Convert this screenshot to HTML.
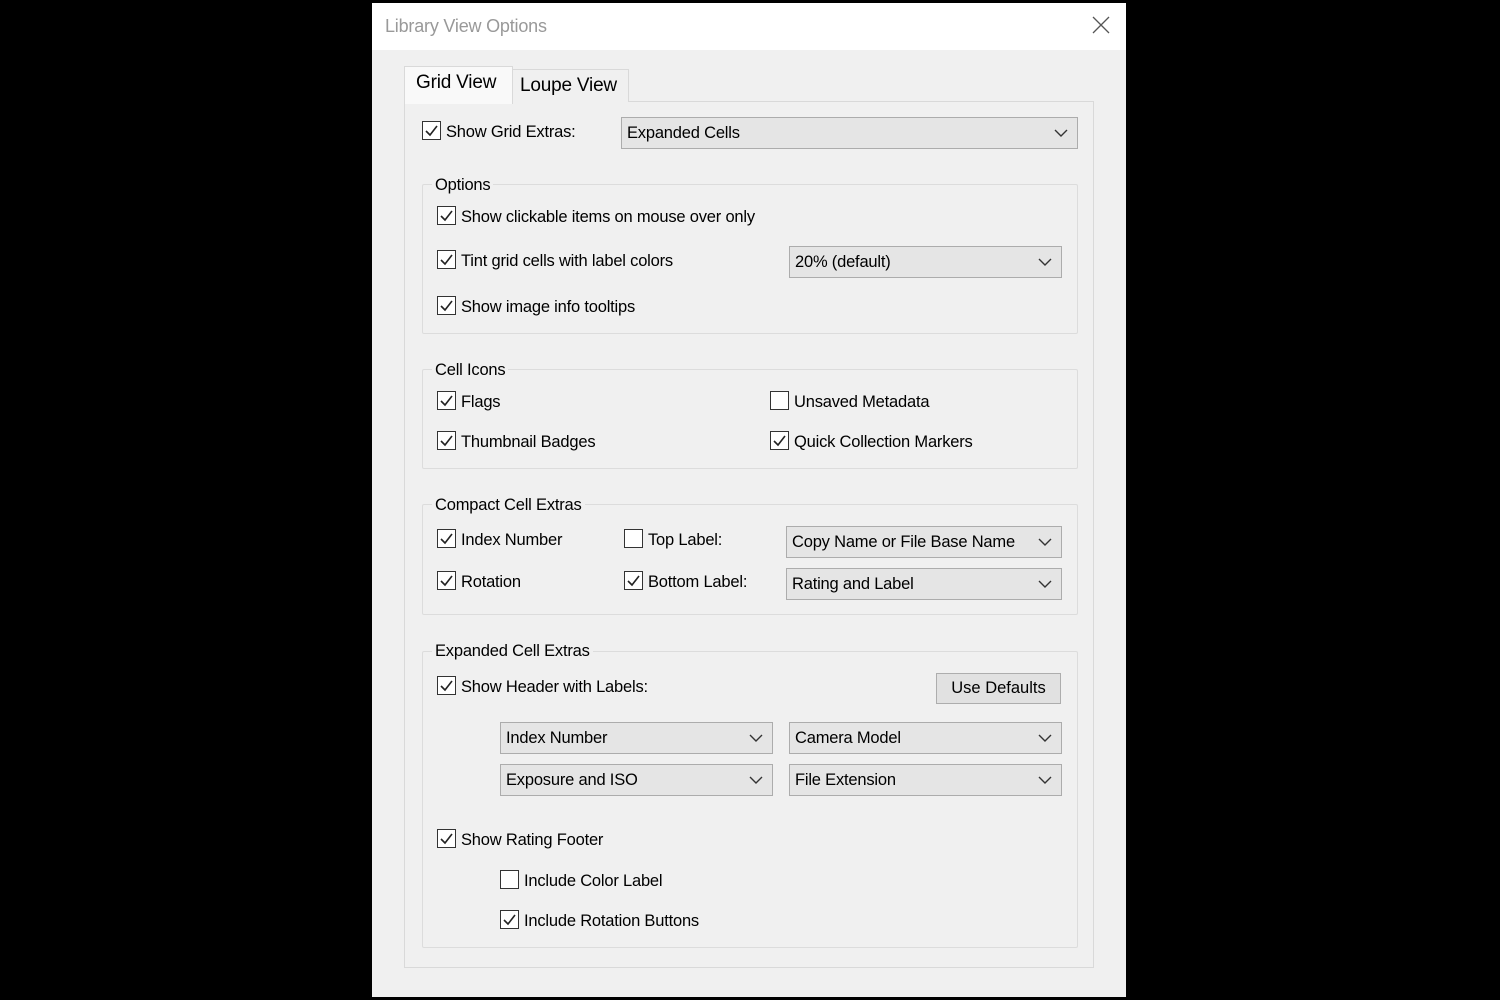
<!DOCTYPE html>
<html><head><style>
body{margin:0;width:1500px;height:1000px;background:#000;position:relative;overflow:hidden;font-family:"Liberation Sans",sans-serif;color:#000}
.a{position:absolute}
#dlg{left:372px;top:3px;width:754px;height:994px;background:#f0f0f0;}
#title{left:372px;top:3px;width:754px;height:47px;background:#fff}
.t{position:absolute;font-size:16.5px;white-space:nowrap;line-height:20px;letter-spacing:-0.2px}
.cb{position:absolute;width:17px;height:17px;border:1.5px solid #333;background:#fff}
.cb svg{position:absolute;left:1px;top:1px}
.grp{position:absolute;border:1px solid #dcdcdc;border-radius:2px}
.gl{position:absolute;background:#f0f0f0;padding:0 3px;font-size:16.5px;line-height:20px;letter-spacing:-0.2px}
.dd{position:absolute;background:#e5e5e5;border:1px solid #acacac;box-sizing:border-box;font-size:16.5px;letter-spacing:-0.2px;padding-left:5px;line-height:30px;white-space:nowrap}
.dd svg{position:absolute;right:9px;top:11px}
.btn{position:absolute;background:#e1e1e1;border:1px solid #adadad;box-sizing:border-box;font-size:16.5px;text-align:center;line-height:29px}
</style></head><body>
<div class="a" id="dlg"></div>
<div class="a" id="title"></div>
<div class="t" style="left:385px;top:16px;color:#999;font-size:18px">Library View Options</div>
<svg class="a" style="left:1092px;top:16px" width="18" height="18"><path d="M1 1L17 17M17 1L1 17" stroke="#555" stroke-width="1.3"/></svg>

<!-- tab panel -->
<div class="a" style="left:404px;top:101px;width:688px;height:865px;border:1px solid #d9d9d9;background:#f0f0f0"></div>
<div class="a" style="left:404px;top:66px;width:107px;height:37px;border:1px solid #d9d9d9;border-bottom:none;background:#f9f9f9"></div>
<div class="a" style="left:512px;top:69px;width:115px;height:32px;border:1px solid #d9d9d9;border-bottom:none;background:#f0f0f0"></div>
<div class="t" style="left:416px;top:73px;font-size:19px">Grid View</div>
<div class="t" style="left:520px;top:76px;font-size:19px">Loupe View</div>

<!-- groups -->
<div class="grp" style="left:422px;top:184px;width:654px;height:148px"></div>
<div class="gl" style="left:432px;top:175px">Options</div>
<div class="grp" style="left:422px;top:369px;width:654px;height:98px"></div>
<div class="gl" style="left:432px;top:360px">Cell Icons</div>
<div class="grp" style="left:422px;top:504px;width:654px;height:109px"></div>
<div class="gl" style="left:432px;top:495px">Compact Cell Extras</div>
<div class="grp" style="left:422px;top:651px;width:654px;height:295px"></div>
<div class="gl" style="left:432px;top:641px">Expanded Cell Extras</div>

<!-- checkboxes -->
<div class="cb" style="left:422px;top:121px"><svg width="15" height="15"><path d="M2 8L6 12L13 3" fill="none" stroke="#222" stroke-width="1.6"/></svg></div>
<div class="t" style="left:446px;top:122px">Show Grid Extras:</div>

<div class="cb" style="left:437px;top:206px"><svg width="15" height="15"><path d="M2 8L6 12L13 3" fill="none" stroke="#222" stroke-width="1.6"/></svg></div>
<div class="t" style="left:461px;top:207px">Show clickable items on mouse over only</div>
<div class="cb" style="left:437px;top:250px"><svg width="15" height="15"><path d="M2 8L6 12L13 3" fill="none" stroke="#222" stroke-width="1.6"/></svg></div>
<div class="t" style="left:461px;top:251px">Tint grid cells with label colors</div>
<div class="cb" style="left:437px;top:296px"><svg width="15" height="15"><path d="M2 8L6 12L13 3" fill="none" stroke="#222" stroke-width="1.6"/></svg></div>
<div class="t" style="left:461px;top:297px">Show image info tooltips</div>

<div class="cb" style="left:437px;top:391px"><svg width="15" height="15"><path d="M2 8L6 12L13 3" fill="none" stroke="#222" stroke-width="1.6"/></svg></div>
<div class="t" style="left:461px;top:392px">Flags</div>
<div class="cb" style="left:437px;top:431px"><svg width="15" height="15"><path d="M2 8L6 12L13 3" fill="none" stroke="#222" stroke-width="1.6"/></svg></div>
<div class="t" style="left:461px;top:432px">Thumbnail Badges</div>
<div class="cb" style="left:770px;top:391px"></div>
<div class="t" style="left:794px;top:392px">Unsaved Metadata</div>
<div class="cb" style="left:770px;top:431px"><svg width="15" height="15"><path d="M2 8L6 12L13 3" fill="none" stroke="#222" stroke-width="1.6"/></svg></div>
<div class="t" style="left:794px;top:432px">Quick Collection Markers</div>

<div class="cb" style="left:437px;top:529px"><svg width="15" height="15"><path d="M2 8L6 12L13 3" fill="none" stroke="#222" stroke-width="1.6"/></svg></div>
<div class="t" style="left:461px;top:530px">Index Number</div>
<div class="cb" style="left:437px;top:571px"><svg width="15" height="15"><path d="M2 8L6 12L13 3" fill="none" stroke="#222" stroke-width="1.6"/></svg></div>
<div class="t" style="left:461px;top:572px">Rotation</div>
<div class="cb" style="left:624px;top:529px"></div>
<div class="t" style="left:648px;top:530px">Top Label:</div>
<div class="cb" style="left:624px;top:571px"><svg width="15" height="15"><path d="M2 8L6 12L13 3" fill="none" stroke="#222" stroke-width="1.6"/></svg></div>
<div class="t" style="left:648px;top:572px">Bottom Label:</div>

<div class="cb" style="left:437px;top:676px"><svg width="15" height="15"><path d="M2 8L6 12L13 3" fill="none" stroke="#222" stroke-width="1.6"/></svg></div>
<div class="t" style="left:461px;top:677px">Show Header with Labels:</div>
<div class="cb" style="left:437px;top:829px"><svg width="15" height="15"><path d="M2 8L6 12L13 3" fill="none" stroke="#222" stroke-width="1.6"/></svg></div>
<div class="t" style="left:461px;top:830px">Show Rating Footer</div>
<div class="cb" style="left:500px;top:870px"></div>
<div class="t" style="left:524px;top:871px">Include Color Label</div>
<div class="cb" style="left:500px;top:910px"><svg width="15" height="15"><path d="M2 8L6 12L13 3" fill="none" stroke="#222" stroke-width="1.6"/></svg></div>
<div class="t" style="left:524px;top:911px">Include Rotation Buttons</div>

<!-- dropdowns -->
<div class="dd" style="left:621px;top:117px;width:457px;height:32px">Expanded Cells<svg width="14" height="9"><path d="M1 1L7 7L13 1" fill="none" stroke="#333" stroke-width="1.4"/></svg></div>
<div class="dd" style="left:789px;top:246px;width:273px;height:32px">20% (default)<svg width="14" height="9"><path d="M1 1L7 7L13 1" fill="none" stroke="#333" stroke-width="1.4"/></svg></div>
<div class="dd" style="left:786px;top:526px;width:276px;height:32px">Copy Name or File Base Name<svg width="14" height="9"><path d="M1 1L7 7L13 1" fill="none" stroke="#333" stroke-width="1.4"/></svg></div>
<div class="dd" style="left:786px;top:568px;width:276px;height:32px">Rating and Label<svg width="14" height="9"><path d="M1 1L7 7L13 1" fill="none" stroke="#333" stroke-width="1.4"/></svg></div>
<div class="dd" style="left:500px;top:722px;width:273px;height:32px">Index Number<svg width="14" height="9"><path d="M1 1L7 7L13 1" fill="none" stroke="#333" stroke-width="1.4"/></svg></div>
<div class="dd" style="left:789px;top:722px;width:273px;height:32px">Camera Model<svg width="14" height="9"><path d="M1 1L7 7L13 1" fill="none" stroke="#333" stroke-width="1.4"/></svg></div>
<div class="dd" style="left:500px;top:764px;width:273px;height:32px">Exposure and ISO<svg width="14" height="9"><path d="M1 1L7 7L13 1" fill="none" stroke="#333" stroke-width="1.4"/></svg></div>
<div class="dd" style="left:789px;top:764px;width:273px;height:32px">File Extension<svg width="14" height="9"><path d="M1 1L7 7L13 1" fill="none" stroke="#333" stroke-width="1.4"/></svg></div>
<div class="btn" style="left:936px;top:673px;width:125px;height:31px">Use Defaults</div>
</body></html>
